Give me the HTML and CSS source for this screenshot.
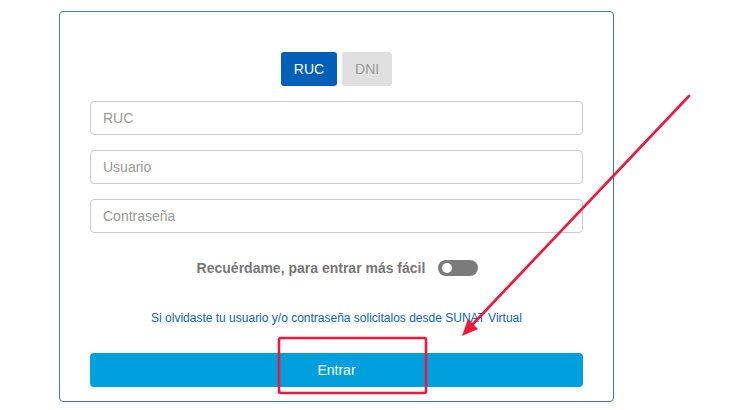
FILE: index.html
```html
<!DOCTYPE html>
<html lang="es">
<head>
    <meta charset="UTF-8">
    <title>SUNAT - Ingreso</title>
    <link rel="stylesheet" href="styles.css">
</head>

<body>
    <div class="page">
        <!-- caja de login -->
        <form class="login">
            <div class="tabs">
                <button type="button" class="tab on">RUC</button>
                <button type="button" class="tab">DNI</button>
            </div>

            <input class="field" type="text" placeholder="RUC">
            <input class="field" type="text" placeholder="Usuario">
            <input class="field" type="password" placeholder="Contraseña">

            <div class="remember">
                <span>Recuérdame, para entrar más fácil</span>
                <span class="switch"><i></i></span>
            </div>

            <a class="forgot" href="">Si olvidaste tu usuario y/o contraseña solicitalos desde SUNAT Virtual</a>

            <button type="button" class="btn-enter">Entrar</button>
        </form>

        <!-- anotacion roja (flecha + recuadro) -->
        <svg class="mark" width="744" height="410" viewBox="0 0 744 410">
            <rect x="279" y="338" width="147" height="55" rx="2" fill="none" stroke="#f0173d" stroke-width="2.6"/>
            <line x1="689" y1="96" x2="472" y2="325" stroke="#f0173d" stroke-width="2.6" stroke-linecap="round"/>
            <polygon points="462,336 478,329 468,319" fill="#f0173d"/>
        </svg>
    </div>
</body></html>
```

FILE: styles.css
```css
html,
body {
    margin: 0;
    padding: 0;
    background-color: #fff;
}

.page {
    position: relative;
    width: 744px;
    height: 410px;
    padding: 11px 0 0 59px;
    box-sizing: border-box;
    font-family: "Liberation Sans", Arial, sans-serif;
}

/*박스*/
.login {
    display: flex;
    flex-direction: column;
    align-items: stretch;
    width: 555px;
    padding: 40px 30px 14px;
    box-sizing: border-box;
    border: 1px solid #3f78b4;
    border-radius: 4px;
}

.tabs {
    display: flex;
    justify-content: center;
    gap: 5px;
    margin-bottom: 15px;
}

.tab {
    height: 34px;
    padding: 0 13px;
    border: 0;
    border-radius: 3px;
    background-color: #e0e0e0;
    color: #9a9a9a;
    font: 14px "Liberation Sans", Arial, sans-serif;
}

.tab.on {
    background-color: #005fb9;
    color: #fff;
}

.field {
    height: 34px;
    margin: 0 0 15px;
    padding: 0 12px;
    box-sizing: border-box;
    border: 1px solid #ccc;
    border-radius: 4px;
    font: 14px "Liberation Sans", Arial, sans-serif;
    color: #555;
}

.field::placeholder {
    color: #999;
}

.field:last-of-type {
    margin-bottom: 0;
}

.remember {
    display: flex;
    justify-content: center;
    align-items: center;
    gap: 13px;
    height: 16px;
    margin-top: 27px;
    padding-left: 2px;
    color: #777;
    font-weight: bold;
    font-size: 14px;
}

.switch {
    position: relative;
    display: block;
    width: 40px;
    height: 16px;
    border-radius: 8px;
    background-color: #7b7b7b;
}

/*동그라미*/
.switch i {
    position: absolute;
    top: 3px;
    left: 4px;
    width: 10px;
    height: 10px;
    border-radius: 50%;
    background-color: #fff;
}

.forgot {
    display: block;
    margin-top: 34px;
    text-align: center;
    color: #0d63b6;
    font-size: 12px;
    line-height: 16px;
    text-decoration: none;
}

.btn-enter {
    height: 34px;
    margin-top: 27px;
    border: 0;
    border-radius: 4px;
    background-color: #00a0df;
    color: #fff;
    font: 14px "Liberation Sans", Arial, sans-serif;
}

.mark {
    position: absolute;
    top: 0;
    left: 0;
    pointer-events: none;
}
```
